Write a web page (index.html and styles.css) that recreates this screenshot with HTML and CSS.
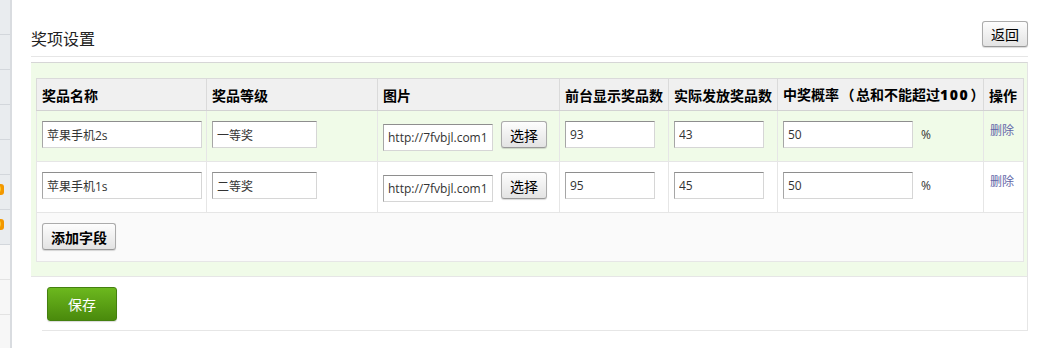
FILE: index.html
```html
<!DOCTYPE html>
<html lang="zh-CN">
<head>
<meta charset="utf-8">
<title>奖项设置</title>
<link rel="stylesheet" href="styles.css">
</head>
<body>
<div class="page">
  <aside class="side">
    <div class="side-item"></div>
    <div class="side-item"></div>
    <div class="side-item"></div>
    <div class="side-item"></div>
    <div class="side-item"></div>
    <div class="side-item"><span class="badge">0</span></div>
    <div class="side-item"><span class="badge">0</span></div>
    <div class="side-item light"></div>
    <div class="side-item light"></div>
    <div class="side-item light"></div>
  </aside>
  <main class="main">
    <div class="head">
      <h2 class="title">奖项设置</h2>
      <button class="btn btn-back" type="button">返回</button>
    </div>
    <div class="panel">
      <table class="grid">
        <colgroup>
          <col class="c1"><col class="c2"><col class="c3"><col class="c4"><col class="c5"><col class="c6"><col class="c7">
        </colgroup>
        <thead>
          <tr class="hrow">
            <th>奖品名称</th>
            <th>奖品等级</th>
            <th>图片</th>
            <th>前台显示奖品数</th>
            <th>实际发放奖品数</th>
            <th>中奖概率<span class="paren">（</span>总和不能超过<span class="num">100</span><span class="paren">）</span></th>
            <th>操作</th>
          </tr>
        </thead>
        <tbody>
          <tr class="row row-green">
            <td><input class="ipt w-name" value="苹果手机2s"></td>
            <td><input class="ipt w-level" value="一等奖"></td>
            <td><div class="pic"><input class="ipt w-pic" value="http://7fvbjl.com1.z0.glb.clouddn.com/"><button class="btn btn-pick" type="button">选择</button></div></td>
            <td><input class="ipt w-num" value="93"></td>
            <td><input class="ipt w-num" value="43"></td>
            <td><div class="prob"><input class="ipt w-prob" value="50"><span>%</span></div></td>
            <td><a class="del" href="#">删除</a></td>
          </tr>
          <tr class="row row-white">
            <td><input class="ipt w-name" value="苹果手机1s"></td>
            <td><input class="ipt w-level" value="二等奖"></td>
            <td><div class="pic"><input class="ipt w-pic" value="http://7fvbjl.com1.z0.glb.clouddn.com/"><button class="btn btn-pick" type="button">选择</button></div></td>
            <td><input class="ipt w-num" value="95"></td>
            <td><input class="ipt w-num" value="45"></td>
            <td><div class="prob"><input class="ipt w-prob" value="50"><span>%</span></div></td>
            <td><a class="del" href="#">删除</a></td>
          </tr>
          <tr class="row-add">
            <td colspan="7"><button class="btn btn-add" type="button">添加字段</button></td>
          </tr>
        </tbody>
      </table>
    </div>
    <div class="foot">
      <button class="btn-save" type="button">保存</button>
    </div>
  </main>
</div>
</body>
</html>
```

FILE: styles.css
```css
html, body {
  margin: 0;
  padding: 0;
  background: #fff;
}
body {
  font-family: "Liberation Sans", "Noto Sans CJK SC", sans-serif;
  font-size: 12px;
  color: #333;
  text-spacing-trim: space-all;
}
.page {
  display: flex;
  min-height: 348px;
}

/* sidebar stub */
.side {
  width: 10px;
  flex: none;
  border-right: 2px solid #d9dce0;
  background: #f7f7f7;
  overflow: hidden;
}
.side-item {
  position: relative;
  height: 34px;
  border-bottom: 1px solid #d3d7dc;
  background: #e9ecef;
}
.side-item.light {
  background: #f7f7f7;
  border-bottom-color: #e3e3e3;
}
.badge {
  position: absolute;
  left: -8px;
  top: 9px;
  width: 12px;
  height: 11px;
  border-radius: 3px;
  background: #f39800;
  color: #fff;
  font: bold 10px/11px "Liberation Sans", sans-serif;
  text-align: center;
}

/* main */
.main {
  flex: 1;
  min-width: 0;
  padding: 0 10px 0 19px;
}
.head {
  display: flex;
  justify-content: space-between;
  align-items: flex-start;
  padding-top: 21px;
  height: 35px;
  border-bottom: 1px solid #e6e6e6;
}
.title {
  margin: 6px 0 0;
  font: normal 16px/22px "Noto Sans CJK SC", sans-serif;
  color: #222;
}
.btn {
  box-sizing: border-box;
  padding: 0;
  font: 14px/1 "Noto Sans CJK SC", sans-serif;
  color: #000;
  border: 1px solid #ababab;
  border-bottom-color: #999;
  border-radius: 3px;
  background: linear-gradient(#fdfdfd, #e3e3e3);
  box-shadow: 0 1px 1px rgba(0, 0, 0, 0.15);
  cursor: pointer;
}
.btn-back {
  width: 46px;
  height: 26px;
}

/* green panel */
.panel {
  margin-top: 5px;
  border-top: 1px solid #d6d6d6;
  border-right: 1px solid #e4e4e4;
  border-bottom: 1px solid #e6e6e6;
  background: #f0fbe8;
  padding: 15px 4px 14px 5px;
}
.grid {
  width: 987px;
  table-layout: fixed;
  border-collapse: collapse;
}
.c1 { width: 170px; }
.c2 { width: 171px; }
.c3 { width: 182px; }
.c4 { width: 109px; }
.c5 { width: 109px; }
.c6 { width: 206px; }
.c7 { width: 40px; }

.hrow {
  height: 32px;
}
.grid th {
  background: #f0f0f0;
  border: 1px solid #dadada;
  border-bottom-color: #d2d2d2;
  padding: 0 5px;
  text-align: left;
  vertical-align: middle;
  font: bold 14px/20px "Noto Sans CJK SC", sans-serif;
  color: #000;
  white-space: nowrap;
  overflow: hidden;
}
.grid th .num {
  font-family: "Open Sans", sans-serif;
  font-weight: 800;
  letter-spacing: 1.5px;
}
.grid th .paren {
  display: inline-block;
  width: 17px;
  text-align: center;
  font-family: "Noto Sans CJK TC", sans-serif;
}
.row {
  height: 51px;
}
.grid td {
  border: 1px solid #e6e6e6;
  padding: 10px 5px 0;
  vertical-align: top;
}
.row-green td { background: #f0fbe8; }
.row-white td { background: #fff; }
.row-add {
  height: 49px;
}
.row-add td {
  background: #fafafa;
}

.ipt {
  box-sizing: border-box;
  display: block;
  height: 27px;
  margin: 0;
  padding: 0 4px;
  border: 1px solid;
  border-color: #8e8e8e #d6d6d6 #d6d6d6 #a6a6a6;
  background: #fff;
  font: 12px "Open Sans", "Noto Sans CJK SC", sans-serif;
  color: #333;
  outline: none;
}
.w-name { width: 160px; }
.w-level { width: 105px; }
.w-pic { width: 110px; margin-top: 3px; }
.w-num { width: 90px; }
.w-prob { width: 130px; }

.pic {
  display: flex;
  align-items: flex-start;
  gap: 8px;
}
.btn-pick {
  width: 46px;
  height: 27px;
}
.prob {
  display: flex;
  align-items: center;
  gap: 8px;
  color: #333;
  font-family: "Open Sans", sans-serif;
}
.del {
  display: block;
  margin-left: 1px;
  font: 12px/18px "Noto Sans CJK SC", sans-serif;
  color: #6266a8;
  text-decoration: none;
}
.btn-add {
  width: 74px;
  height: 27px;
  font-weight: bold;
}

/* footer */
.foot {
  margin-left: 11px;
  padding: 10px 0 9px 5px;
  border-right: 1px solid #e6e6e6;
  border-bottom: 1px solid #e6e6e6;
}
.btn-save {
  box-sizing: border-box;
  width: 70px;
  height: 34px;
  padding: 0;
  border: 1px solid #44800f;
  border-radius: 3px;
  background: linear-gradient(#6cb81e, #4a8a0c);
  box-shadow: 0 1px 1px rgba(0, 0, 0, 0.15);
  color: #fff;
  font: 14px/1 "Noto Sans CJK SC", sans-serif;
  cursor: pointer;
}
```
